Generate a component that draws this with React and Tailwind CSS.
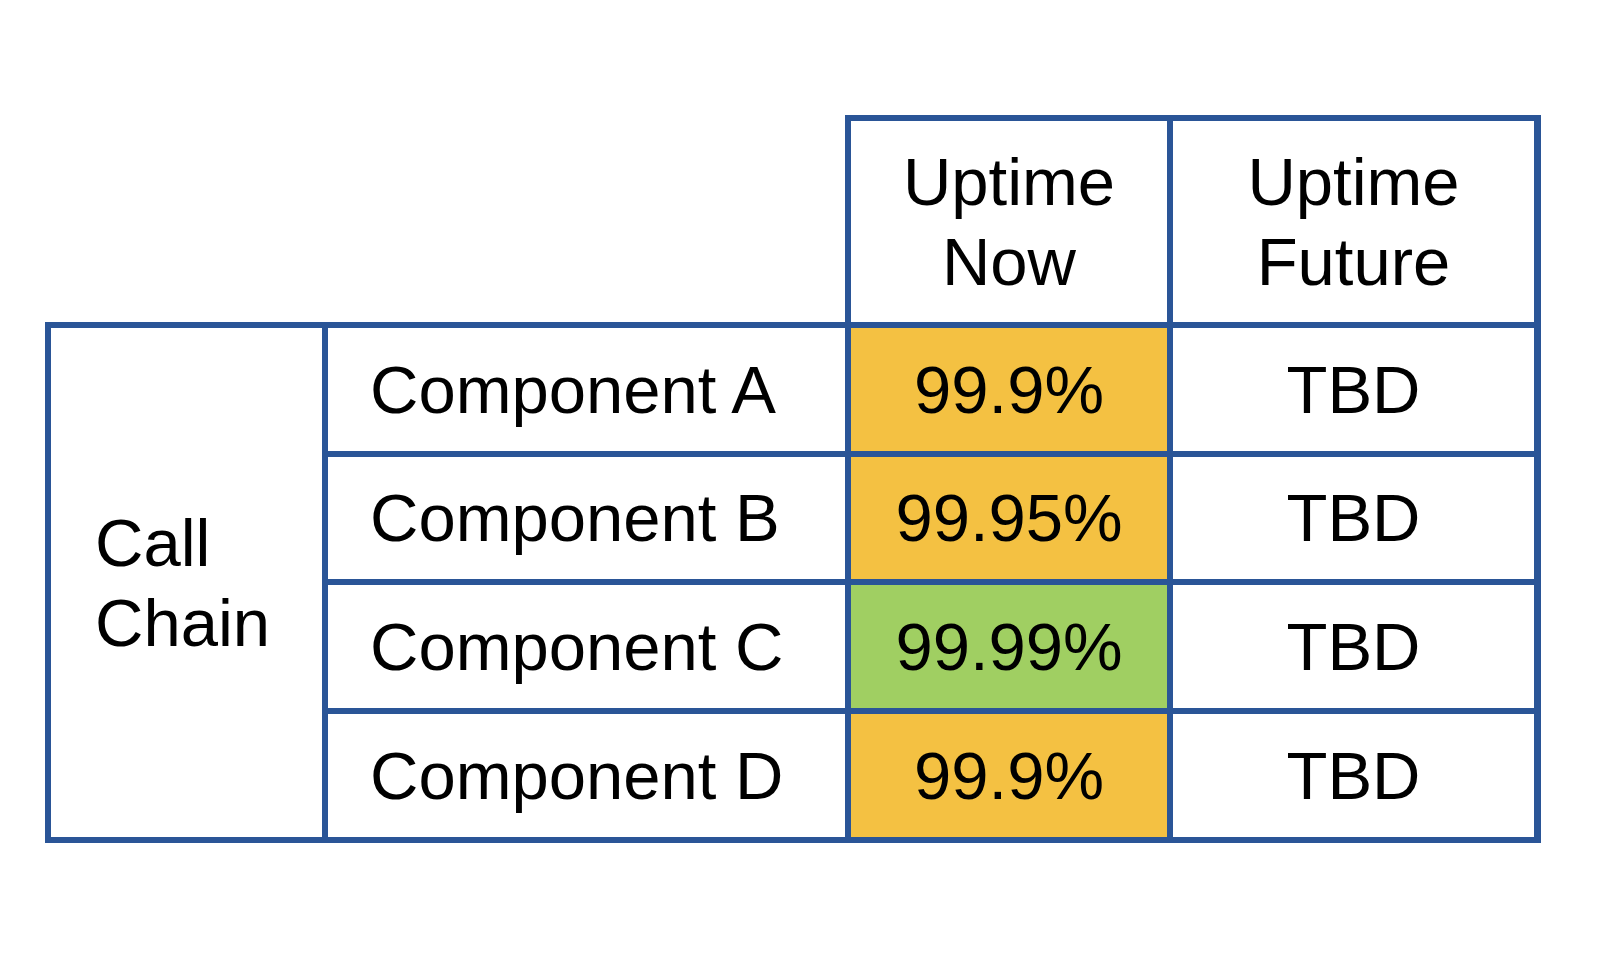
import React from "react";

const rows = [
  { name: "Component A", now: "99.9%", bg: "bg-[#f4c142]" },
  { name: "Component B", now: "99.95%", bg: "bg-[#f4c142]" },
  { name: "Component C", now: "99.99%", bg: "bg-[#a0cf62]" },
  { name: "Component D", now: "99.9%", bg: "bg-[#f4c142]" },
];

export default function App() {
  return (
    <div
      className="min-h-[977px] w-[1600px] bg-white pt-[115px] pl-[45px] text-black text-[67px] leading-[80px]"
      style={{ fontFamily: '"Liberation Sans", Arial, sans-serif' }}
    >
      {/* header */}
      <div className="ml-[800px] flex w-[696px] gap-[6px] bg-[#2a5597] pt-[6px] pl-[6px] pr-[7px]">
        <div className="flex h-[201px] w-[316px] items-center justify-center bg-white text-center">
          Uptime
          <br />
          Now
        </div>
        <div className="flex h-[201px] w-[361px] items-center justify-center bg-white text-center">
          Uptime
          <br />
          Future
        </div>
      </div>

      {/* body */}
      <div className="grid w-[1496px] grid-cols-[271px_517px_316px_361px] grid-rows-[123px_122px_123px_123px] gap-[6px] bg-[#2a5597] p-[6px] pr-[7px]">
        <div className="row-span-4 flex items-center bg-white pl-[44px]">
          Call
          <br />
          Chain
        </div>
        {rows.map((r) => (
          <React.Fragment key={r.name}>
            <div className="col-start-2 flex items-center bg-white pl-[42px]">
              {r.name}
            </div>
            <div className={`flex items-center justify-center ${r.bg}`}>
              {r.now}
            </div>
            <div className="flex items-center justify-center bg-white">TBD</div>
          </React.Fragment>
        ))}
      </div>
    </div>
  );
}
